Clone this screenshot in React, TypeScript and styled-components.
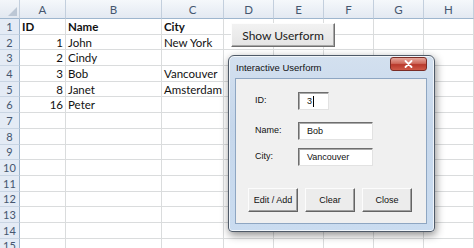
import React from "react";
import styled, { createGlobalStyle } from "styled-components";

const GlobalStyle = createGlobalStyle`
  html, body {
    margin: 0;
    padding: 0;
    background: #fff;
    overflow: hidden;
  }
`;

const columns = ["A", "B", "C", "D", "E", "F", "G", "H"];

const data: Record<number, string[]> = {
  1: ["ID", "Name", "City"],
  2: ["1", "John", "New York"],
  3: ["2", "Cindy", ""],
  4: ["3", "Bob", "Vancouver"],
  5: ["8", "Janet", "Amsterdam"],
  6: ["16", "Peter", ""],
};

const rowCount = 15;

const App = () => {
  const rows = Array.from({ length: rowCount }, (_, i) => i + 1);
  return (
    <Page>
      <GlobalStyle />
      <Sheet>
        <Corner>
          <svg width="9" height="9" viewBox="0 0 9 9">
            <polygon points="9,0 9,9 0,9" fill="#bcc7d5" />
          </svg>
        </Corner>
        {columns.map((c) => (
          <ColHeader key={c}>{c}</ColHeader>
        ))}
        {rows.map((r) => (
          <React.Fragment key={r}>
            <RowHeader>{r}</RowHeader>
            {columns.map((c, ci) => {
              const value = data[r]?.[ci] ?? "";
              return (
                <Cell
                  key={c}
                  $bold={r === 1}
                  $right={ci === 0 && r > 1}
                >
                  {value}
                </Cell>
              );
            })}
          </React.Fragment>
        ))}
      </Sheet>

      <ShowButton>Show Userform</ShowButton>

      <Dialog>
        <TitleBar>
          <Title>Interactive Userform</Title>
          <CloseX>
            <svg width="9" height="8" viewBox="0 0 9 8">
              <path
                d="M1.5 1 L7.5 7 M7.5 1 L1.5 7"
                stroke="#fff"
                strokeWidth="1.8"
                strokeLinecap="round"
              />
            </svg>
          </CloseX>
        </TitleBar>
        <Client>
          <FormRow $top={13}>
            <Label>ID:</Label>
            <TextBox $width={31}>
              3<Caret />
            </TextBox>
          </FormRow>
          <FormRow $top={12}>
            <Label>Name:</Label>
            <TextBox $width={75}>Bob</TextBox>
          </FormRow>
          <FormRow $top={8}>
            <Label>City:</Label>
            <TextBox $width={75}>Vancouver</TextBox>
          </FormRow>
          <ButtonRow>
            <FormButton>Edit / Add</FormButton>
            <FormButton>Clear</FormButton>
            <FormButton>Close</FormButton>
          </ButtonRow>
        </Client>
      </Dialog>
    </Page>
  );
};

const Page = styled.div`
  position: relative;
  width: 474px;
  height: 248px;
  overflow: hidden;
  background: #fff;
`;

const Sheet = styled.div`
  display: grid;
  grid-template-columns: 20px 46px 96px 62px repeat(5, 50px);
  grid-template-rows: 19px;
  grid-auto-rows: 15.7px;
`;

const Corner = styled.div`
  display: flex;
  align-items: flex-end;
  justify-content: flex-end;
  padding: 0 2px 2px 0;
  background: linear-gradient(#f3f6fa, #e2e8f1);
  border-right: 1px solid #c3cfdd;
  border-bottom: 1px solid #9eb6ce;
`;

const ColHeader = styled.div`
  display: flex;
  align-items: center;
  justify-content: center;
  background: linear-gradient(#f5f8fb, #e3e9f2);
  border-right: 1px solid #c3cfdd;
  border-bottom: 1px solid #9eb6ce;
  font-family: Lato, "Liberation Sans", sans-serif;
  font-size: 11.5px;
  color: #45566f;
`;

const RowHeader = styled.div`
  display: flex;
  align-items: center;
  justify-content: center;
  background: #e4ebf5;
  border-right: 1px solid #9eb6ce;
  border-bottom: 1px solid #c9d5e3;
  font-family: Lato, "Liberation Sans", sans-serif;
  font-size: 11px;
  color: #45566f;
`;

const Cell = styled.div<{ $bold?: boolean; $right?: boolean }>`
  display: flex;
  align-items: center;
  justify-content: ${(p) => (p.$right ? "flex-end" : "flex-start")};
  padding: 0 2px;
  border-right: 1px solid #dadcdd;
  border-bottom: 1px solid #dadcdd;
  font-family: Lato, "Liberation Sans", sans-serif;
  font-size: 11.5px;
  font-weight: ${(p) => (p.$bold ? 700 : 400)};
  color: #111;
  white-space: nowrap;
  overflow: visible;
`;

const ShowButton = styled.div`
  position: absolute;
  left: 231px;
  top: 23px;
  width: 104px;
  height: 24px;
  box-sizing: border-box;
  display: flex;
  align-items: center;
  justify-content: center;
  background: linear-gradient(#f2f2f2, #e4e4e4);
  border: 1px solid;
  border-color: #fdfdfd #6f6f6f #6f6f6f #fdfdfd;
  box-shadow: inset -1px -1px 0 #a8a8a8;
  font-family: Lato, "Liberation Sans", sans-serif;
  font-size: 12px;
  color: #222;
`;

const Dialog = styled.div`
  position: absolute;
  left: 228px;
  top: 55px;
  width: 207px;
  height: 177px;
  box-sizing: border-box;
  display: flex;
  flex-direction: column;
  border: 1px solid #4f5a68;
  border-radius: 6px 6px 4px 4px;
  background: linear-gradient(#d3e0ef, #c6d7eb 40%, #cadcf0);
  box-shadow: 1px 3px 8px rgba(0, 0, 0, 0.45),
    inset 0 0 0 1px rgba(255, 255, 255, 0.7);
`;

const TitleBar = styled.div`
  display: flex;
  align-items: flex-start;
  justify-content: space-between;
  height: 22px;
  padding: 0 7px 0 7px;
`;

const Title = styled.span`
  margin-top: 6px;
  font-family: "Liberation Sans", Arial, sans-serif;
  font-size: 9.5px;
  color: #101010;
`;

const CloseX = styled.div`
  margin-top: 1px;
  width: 37px;
  height: 14px;
  box-sizing: border-box;
  display: flex;
  align-items: center;
  justify-content: center;
  border: 1px solid #7a2c25;
  border-radius: 3px;
  background: linear-gradient(#e6a79c, #cf6a5c 45%, #b8392c 55%, #cf5a48);
`;

const Client = styled.div`
  flex: 1;
  margin: 0 7px 7px 6px;
  background: #f0f0f0;
  border: 1px solid #8ea6c2;
  display: flex;
  flex-direction: column;
`;

const FormRow = styled.div<{ $top: number }>`
  display: flex;
  align-items: flex-start;
  margin-top: ${(p) => p.$top}px;
  padding-left: 19px;
`;

const Label = styled.span`
  width: 43px;
  padding-top: 3px;
  font-family: "Liberation Sans", Arial, sans-serif;
  font-size: 9px;
  color: #111;
`;

const TextBox = styled.div<{ $width: number }>`
  width: ${(p) => p.$width}px;
  height: 18px;
  box-sizing: border-box;
  display: flex;
  align-items: center;
  padding-left: 8px;
  background: #fff;
  border: 1px solid;
  border-color: #6e6e6e #e2e2e2 #e2e2e2 #6e6e6e;
  box-shadow: inset 1px 1px 0 #a9a9a9;
  font-family: "Liberation Sans", Arial, sans-serif;
  font-size: 9px;
  color: #111;
`;

const Caret = styled.span`
  display: inline-block;
  width: 1px;
  height: 11px;
  margin-left: 1px;
  background: #000;
`;

const ButtonRow = styled.div`
  display: flex;
  gap: 7px;
  margin-top: 22px;
  padding-left: 12px;
`;

const FormButton = styled.div`
  width: 50px;
  height: 24px;
  box-sizing: border-box;
  display: flex;
  align-items: center;
  justify-content: center;
  background: #ececec;
  border: 1px solid;
  border-color: #fcfcfc #646464 #646464 #fcfcfc;
  box-shadow: inset -1px -1px 0 #a0a0a0;
  font-family: "Liberation Sans", Arial, sans-serif;
  font-size: 9px;
  color: #111;
`;

export default App;
